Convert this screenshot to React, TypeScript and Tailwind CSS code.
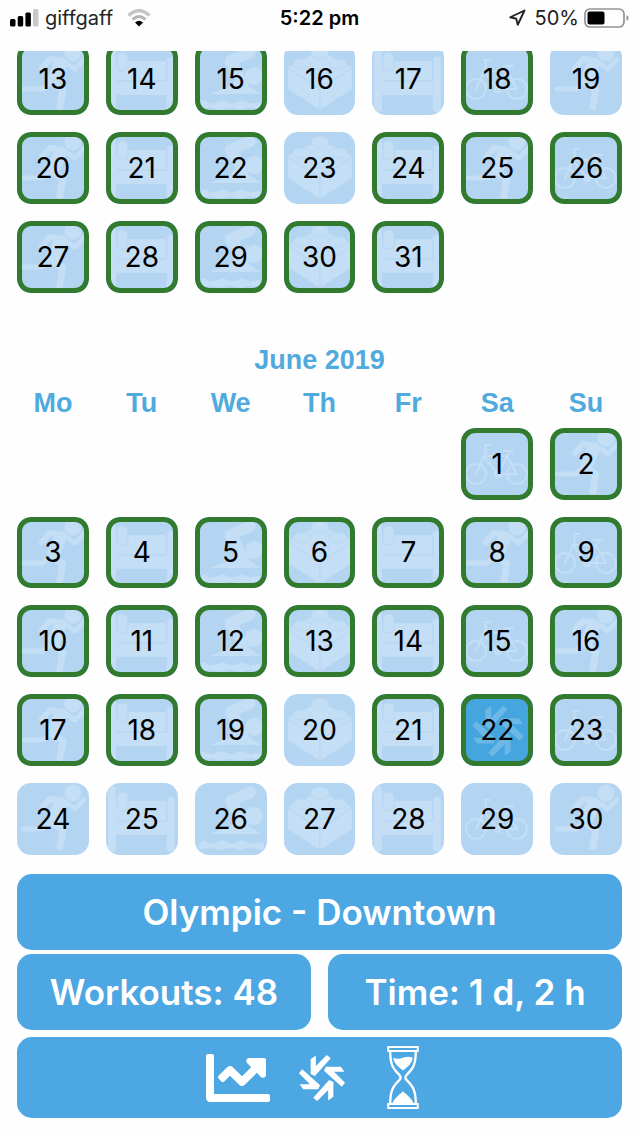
import type { ReactNode } from 'react'
import { Navigation } from 'lucide-react'
import { FaChartLine } from 'react-icons/fa'
import clsx from 'clsx'

type Sport = 'run' | 'rest' | 'swim' | 'brick' | 'bike' | 'race'

type Day = {
  n: number
  sport: Sport
  done?: boolean
}

const WEEKDAYS = ['Mo', 'Tu', 'We', 'Th', 'Fr', 'Sa', 'Su']

// Monday to Sunday
const DEFAULT_WEEK: Sport[] = ['run', 'rest', 'swim', 'brick', 'rest', 'bike', 'run']
const TAPER_WEEK: Sport[] = ['run', 'rest', 'swim', 'brick', 'rest', 'run', 'bike']

function week(first: number, sports: Sport[], missed: number[] = []): Day[] {
  return sports.map((sport, i) => ({
    n: first + i,
    sport,
    done: !missed.includes(first + i),
  }))
}

const MAY: Day[] = [
  ...week(13, DEFAULT_WEEK, [16, 17, 19]),
  ...week(20, TAPER_WEEK, [23]),
  ...week(27, DEFAULT_WEEK.slice(0, 5)),
]

const JUNE: Day[] = [
  ...week(1, ['bike', 'run']),
  ...week(3, TAPER_WEEK),
  ...week(10, DEFAULT_WEEK),
  ...week(17, ['run', 'rest', 'swim', 'brick', 'rest', 'race', 'bike'], [20]),
  ...week(24, DEFAULT_WEEK, [24, 25, 26, 27, 28, 29, 30]),
]

function RaceShape() {
  const blade = 'M-35-58L-19-69V-37L15-71L27-61L-22-6L-35-12Z'
  return (
    <>
      {[0, 90, 180, 270].map((deg) => (
        <path key={deg} d={blade} transform={`rotate(${deg})`} />
      ))}
    </>
  )
}

const SPORT_ART: Record<Sport, ReactNode> = {
  run: (
    <g fill="none" stroke="#c3def5" strokeLinecap="round" strokeLinejoin="round">
      <path d="M25 25L33 16L46 18" strokeWidth="6" />
      <path d="M48 19L58 26L67 17" strokeWidth="5" />
      <path d="M43 22L37 36" strokeWidth="13" />
      <path d="M37 41L46 47L43 64" strokeWidth="7" />
      <path d="M7 46H26L34 39" strokeWidth="5" />
      <circle cx="56" cy="10" r="9" fill="#c3def5" stroke="#b4d5f2" strokeWidth="1" />
    </g>
  ),
  rest: (
    <g fill="#c3def5">
      <rect x="2" y="3" width="8" height="66" rx="3" />
      <rect x="61" y="14" width="8" height="55" rx="3" />
      <rect x="10" y="18" width="51" height="34" rx="2" />
      <rect x="11" y="9" width="11" height="19" rx="5" stroke="#b7d6f2" />
      <path d="M11 38H61M61 18V38" fill="none" stroke="#b4d4f0" />
    </g>
  ),
  swim: (
    <g fill="#c3def5">
      <path d="M33 13L53 4C61 2 64 11 57 15L44 20L54 43L66 51H15L36 43L41 36L31 22C29 18 30 15 33 13Z" />
      <circle cx="59" cy="33" r="9" />
      <path d="M4 60Q8 56 12 59T22 59T32 59T42 59T52 59T62 59L69 60V66Q64 68 60 66T50 66T40 66T30 66T20 66T10 66L4 67Z" />
    </g>
  ),
  brick: (
    <g fill="#c3def5">
      <path d="M4 24L36 8L68 24V46L36 67L4 46Z" />
      <path d="M4 25L36 46L68 25M36 46V67" fill="none" stroke="#b5d5f1" />
      <g stroke="#b9d8f3">
        <ellipse cx="36" cy="10" rx="9" ry="6" />
        <ellipse cx="18" cy="21" rx="9" ry="5" />
        <ellipse cx="54" cy="21" rx="9" ry="5" />
        <ellipse cx="36" cy="31" rx="9" ry="5" />
      </g>
    </g>
  ),
  bike: (
    <g fill="none" stroke="#c3def5" strokeWidth="2" strokeLinecap="round" strokeLinejoin="round">
      <circle cx="15" cy="46" r="10" />
      <circle cx="56" cy="46" r="10" />
      <path d="M15 46L25 24L24 17H29M24 28H46M24 30L37 46L48 25M37 46H56L46 28M43 23H52" />
      <circle cx="37" cy="46" r="3" />
    </g>
  ),
  race: (
    <g fill="#6bb8e6" transform="translate(37 37) scale(0.36)">
      <RaceShape />
    </g>
  ),
}

function DayTile({ day, column }: { day: Day; column?: string }) {
  return (
    <button
      type="button"
      className={clsx(
        'relative grid aspect-square place-items-center overflow-hidden rounded-[14px] text-[28px] leading-none text-black',
        day.sport === 'race' ? 'bg-[#45a5df]' : 'bg-[#b4d5f2]',
        day.done && 'after:absolute after:inset-0 after:rounded-[14px] after:border-5 after:border-[#317a2e]',
        column,
      )}
    >
      <svg viewBox="0 0 72 72" className="absolute inset-0 size-full" aria-hidden="true">
        {SPORT_ART[day.sport]}
      </svg>
      <span className="relative">{day.n}</span>
    </button>
  )
}

function StatusBar() {
  return (
    <header className="grid h-9 shrink-0 grid-cols-3 items-center px-[10px] text-[20px] leading-none text-[#222]">
      <div className="flex items-center gap-[6px]">
        <svg width="29" height="18" viewBox="0 0 29 18" aria-hidden="true">
          <rect x="0" y="10" width="5.5" height="7.5" rx="1.5" />
          <rect x="7.7" y="7" width="5.5" height="10.5" rx="1.5" />
          <rect x="15.4" y="3.5" width="5.5" height="14" rx="1.5" />
          <rect x="23" y="0" width="5.5" height="17.5" rx="1.5" fill="#c8c8ca" />
        </svg>
        <span>giffgaff</span>
        <svg width="24" height="18" viewBox="0 0 24 18" className="ml-2" aria-hidden="true">
          <path d="M1.5 6.5Q12-3 22.5 6.5" fill="none" stroke="#c4c4c6" strokeWidth="3.2" />
          <path d="M5.5 10.5Q12 4.5 18.5 10.5" fill="none" stroke="#b4b4b6" strokeWidth="3" />
          <path d="M8 13.5Q12 10 16 13.5L12 17.5Z" />
        </svg>
      </div>
      <time className="text-center font-semibold text-black">5:22 pm</time>
      <div className="flex items-center justify-end gap-[5px]">
        <Navigation className="mr-1 size-[18px]" strokeWidth={2.5} />
        <span>50%</span>
        <svg width="45" height="20" viewBox="0 0 45 20" aria-hidden="true">
          <rect x="1" y="1" width="39" height="18" rx="5" fill="none" stroke="#929294" strokeWidth="1.7" />
          <rect x="3.5" y="3.5" width="17" height="13" rx="2" />
          <path d="M42.5 7Q47 10 42.5 13Z" fill="#929294" />
        </svg>
      </div>
    </header>
  )
}

function Hourglass() {
  return (
    <svg width="34" height="65" viewBox="0 0 34 66" fill="none" stroke="currentColor" strokeWidth="2.4" aria-hidden="true">
      <path d="M2 2H32V6H2ZM2 60H32V64H2Z" strokeWidth="2" />
      <path d="M4 6C4 20 7 24 13 30C15 32 15 34 13 36C7 42 4 46 4 60M30 6C30 20 27 24 21 30C19 32 19 34 21 36C27 42 30 46 30 60" />
      <path d="M7 13Q12 15 17 13Q22 11 27 13C26 19 22 22 17 26C12 22 8 19 7 13Z" fill="currentColor" stroke="none" />
      <path d="M6 60C8 54 13 51 17 47C21 51 26 54 28 60Z" fill="currentColor" stroke="none" />
    </svg>
  )
}

export default function App() {
  const panel = 'rounded-[15px] bg-[#4da7e2] text-white'

  return (
    <div className="flex h-screen flex-col overflow-hidden bg-[#fefefe] font-['Inter','Liberation_Sans',sans-serif]">
      <StatusBar />

      {/* Calendar stays scrolled to the last week */}
      <main className="mt-[15px] flex min-h-0 flex-1 flex-col justify-end overflow-hidden px-[17px]">
        <section className="grid shrink-0 grid-cols-7 gap-[17px]" aria-label="May 2019">
          {MAY.map((day) => (
            <DayTile key={day.n} day={day} />
          ))}
        </section>

        <section
          className="mt-[51px] shrink-0 font-['Liberation_Sans',sans-serif] text-[27px] leading-8 font-bold text-[#50aadd]"
          aria-label="June 2019"
        >
          <h2 className="text-center">June 2019</h2>
          <div className="mt-[11px] grid grid-cols-7 gap-[17px] text-center">
            {WEEKDAYS.map((name) => (
              <span key={name}>{name}</span>
            ))}
          </div>
          <div className="mt-[9px] grid grid-cols-7 gap-[17px] font-['Inter','Liberation_Sans',sans-serif] font-normal">
            {JUNE.map((day, i) => (
              <DayTile key={day.n} day={day} column={i === 0 ? 'col-start-6' : undefined} />
            ))}
          </div>
        </section>
      </main>

      <footer className="shrink-0 px-[17px] pt-[19px] pb-[18px] text-[35px] leading-10 font-semibold">
        <h1 className={clsx(panel, 'py-[18px] text-center')}>Olympic - Downtown</h1>
        <div className="mt-1 grid grid-cols-2 gap-[17px] text-center">
          <div className={clsx(panel, 'py-[18px]')}>Workouts: 48</div>
          <div className={clsx(panel, 'py-[18px]')}>Time: 1 d, 2 h</div>
        </div>
        <nav className={clsx(panel, 'mt-[7px] flex items-center justify-center gap-7 py-2 pr-[14px]')}>
          <button type="button" aria-label="Progress">
            <FaChartLine size={64} />
          </button>
          <button type="button" aria-label="Race">
            <svg width="48" height="48" viewBox="-74 -74 148 148" fill="currentColor" aria-hidden="true">
              <RaceShape />
            </svg>
          </button>
          <button type="button" aria-label="History" className="ml-3">
            <Hourglass />
          </button>
        </nav>
      </footer>
    </div>
  )
}
